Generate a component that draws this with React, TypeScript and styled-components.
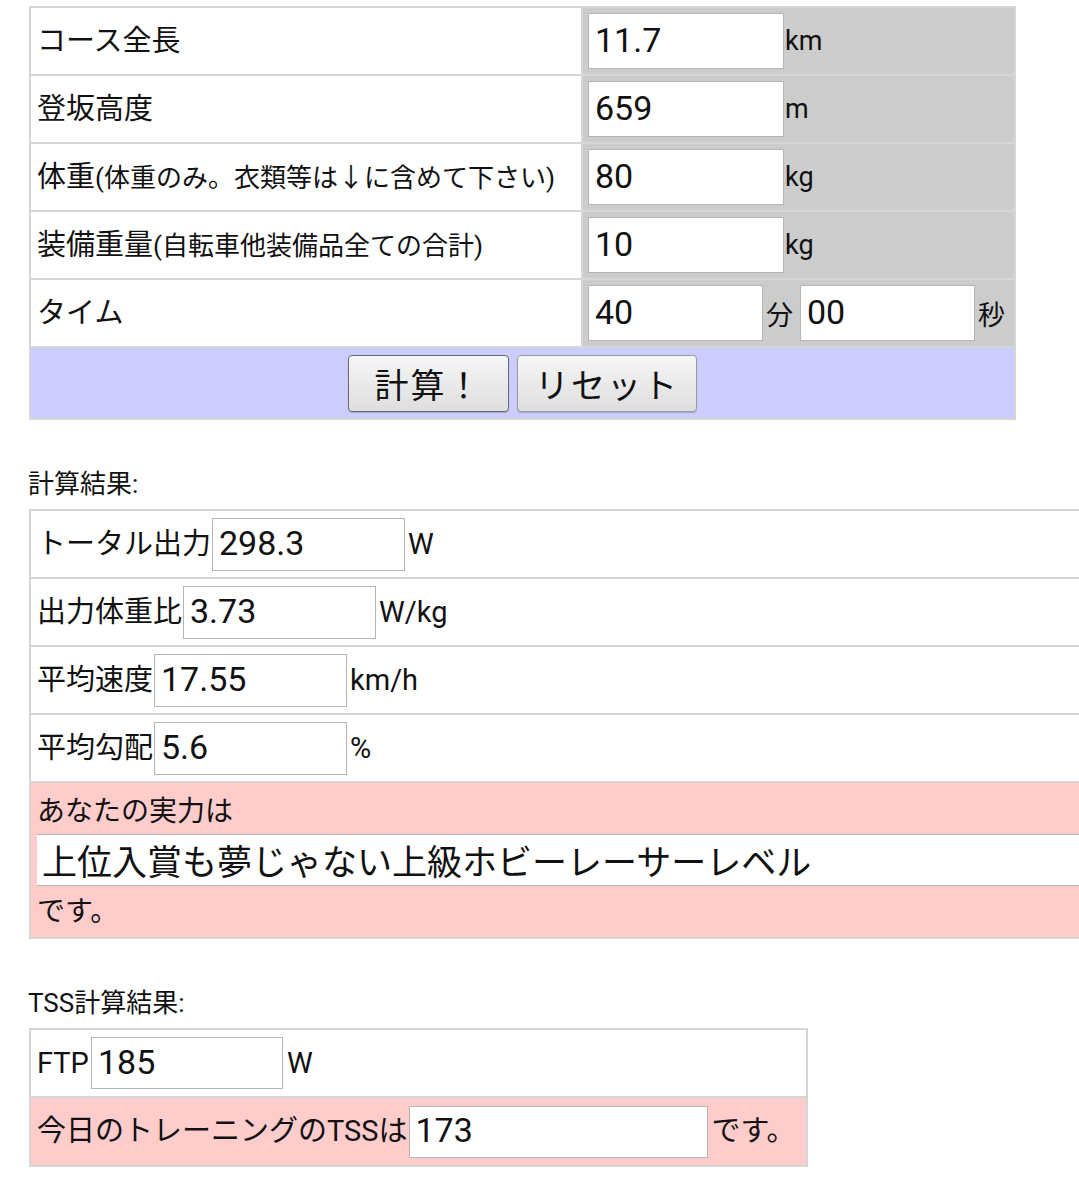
import React from 'react';
import styled, { createGlobalStyle } from 'styled-components';

const GlobalStyle = createGlobalStyle`
  html, body {
    margin: 0;
    background: #fff;
    overflow-x: hidden;
  }
  body {
    padding: 6px 0 0 29px;
    font-family: Roboto, "Noto Sans CJK JP", sans-serif;
    color: #111;
  }
`

const Grid = styled.table<{ width: number }>`
  width: ${p => p.width}px;
  border-collapse: separate;
  border-spacing: 2px;
  background: #d6d6d6;
  table-layout: fixed;
`

const Label = styled.td<{ tone?: 'white' | 'pink'; h?: number }>`
  height: ${p => p.h ?? 66}px;
  padding: 0 6px;
  background: ${p => (p.tone === 'pink' ? '#ffcccc' : '#fff')};
  font-size: 29px;
  line-height: 1;
  white-space: nowrap;
  vertical-align: middle;
  overflow: hidden;
`

const Value = styled.td`
  background: #cccccc;
  padding: 0 5px;
  font-size: 27px;
  white-space: nowrap;
  vertical-align: middle;
`

const Small = styled.span`
  font-size: 26px;
`

const Box = styled.input<{ w: number; h?: number }>`
  width: ${p => p.w}px;
  height: ${p => p.h ?? 56}px;
  box-sizing: border-box;
  margin: 0;
  padding: 0 0 3px 6px;
  border: 1px solid #b4b4b4;
  background: #fff;
  font-family: Roboto, "Noto Sans CJK JP", sans-serif;
  font-size: 34px;
  color: #111;
  vertical-align: middle;
  outline: none;
`

const Unit = styled.span<{ gap?: number }>`
  display: inline-block;
  margin-left: ${p => p.gap ?? 1}px;
  margin-right: ${p => p.gap ?? 1}px;
  vertical-align: middle;
`

const ButtonRow = styled.td`
  height: 70px;
  padding: 0;
  background: #ccccff;
  text-align: center;
  vertical-align: middle;
`

const Btn = styled.button<{ w: number; focused?: boolean }>`
  width: ${p => p.w}px;
  height: 57px;
  margin: 0 4px;
  border: 1px solid ${p => (p.focused ? '#6a6a6a' : '#9a9a9a')};
  border-radius: 4px;
  background: linear-gradient(#f6f6f6, #dedede);
  box-shadow: 0 1px 1px rgba(0, 0, 0, 0.2);
  font-family: Roboto, "Noto Sans CJK JP", sans-serif;
  font-size: 34px;
  color: #111;
  letter-spacing: 2px;
`

const Heading = styled.div`
  margin: 44px 0 4px -1px;
  font-size: 26px;
  line-height: 41px;
`

const Field = styled.div`
  display: flex;
  align-items: center;
  height: 100%;
`

const Stack = styled.td`
  background: #ffcccc;
  padding: 4px 0 5px 6px;
  font-size: 28px;
  white-space: nowrap;
  overflow: hidden;
`

const Line = styled.div<{ h: number }>`
  height: ${p => p.h}px;
  display: flex;
  align-items: center;
`

const Verdict = styled.input`
  display: block;
  width: 1060px;
  height: 52px;
  margin: 3px 0 0 0;
  box-sizing: border-box;
  padding: 0 0 2px 5px;
  border: none;
  border-top: 1px solid #b4b4b4;
  border-bottom: 1px solid #b4b4b4;
  background: #fff;
  font-family: Roboto, "Noto Sans CJK JP", sans-serif;
  font-size: 35px;
  color: #111;
  outline: none;
`

const inputs = [
  { label: 'コース全長', value: '11.7', unit: 'km' },
  { label: '登坂高度', value: '659', unit: 'm' },
  { label: '体重', small: '(体重のみ。衣類等は↓に含めて下さい)', value: '80', unit: 'kg' },
  { label: '装備重量', small: '(自転車他装備品全ての合計)', value: '10', unit: 'kg' },
]

const results = [
  { label: 'トータル出力', value: '298.3', unit: 'W' },
  { label: '出力体重比', value: '3.73', unit: 'W/kg' },
  { label: '平均速度', value: '17.55', unit: 'km/h' },
  { label: '平均勾配', value: '5.6', unit: '%' },
]

export default function App() {
  return (
    <>
      <GlobalStyle />
      <Grid width={987}>
        <colgroup>
          <col style={{ width: 550 }} />
          <col />
        </colgroup>
        <tbody>
          {inputs.map(r => (
            <tr key={r.label}>
              <Label>
                {r.label}
                {r.small && <Small>{r.small}</Small>}
              </Label>
              <Value>
                <Box w={196} defaultValue={r.value} />
                <Unit>{r.unit}</Unit>
              </Value>
            </tr>
          ))}
          <tr>
            <Label>タイム</Label>
            <Value>
              <Box w={175} defaultValue="40" />
              <Unit gap={3}>分</Unit>
              <Box w={175} defaultValue="00" style={{ marginLeft: 4 }} />
              <Unit gap={3}>秒</Unit>
            </Value>
          </tr>
          <tr>
            <ButtonRow colSpan={2}>
              <Btn w={161} focused>計算！</Btn>
              <Btn w={180}>リセット</Btn>
            </ButtonRow>
          </tr>
        </tbody>
      </Grid>

      <Heading>計算結果:</Heading>
      <Grid width={1072}>
        <tbody>
          {results.map(r => (
            <tr key={r.label}>
              <Label>
                <Field>
                  {r.label}
                  <Box w={193} h={53} defaultValue={r.value} style={{ marginLeft: 1 }} />
                  <Unit gap={3}>{r.unit}</Unit>
                </Field>
              </Label>
            </tr>
          ))}
          <tr>
            <Stack>
              <Line h={44}>あなたの実力は</Line>
              <Verdict defaultValue="上位入賞も夢じゃない上級ホビーレーサーレベル" />
              <Line h={46}>です。</Line>
            </Stack>
          </tr>
        </tbody>
      </Grid>

      <Heading>TSS計算結果:</Heading>
      <Grid width={779}>
        <tbody>
          <tr>
            <Label>
              <Field>
                FTP
                <Box w={192} h={52} defaultValue="185" style={{ marginLeft: 2 }} />
                <Unit gap={4}>W</Unit>
              </Field>
            </Label>
          </tr>
          <tr>
            <Label tone="pink" h={67}>
              <Field>
                今日のトレーニングのTSSは
                <Box w={299} h={52} defaultValue="173" style={{ marginLeft: 1 }} />
                <Unit gap={4}>です。</Unit>
              </Field>
            </Label>
          </tr>
        </tbody>
      </Grid>
    </>
  )
}
